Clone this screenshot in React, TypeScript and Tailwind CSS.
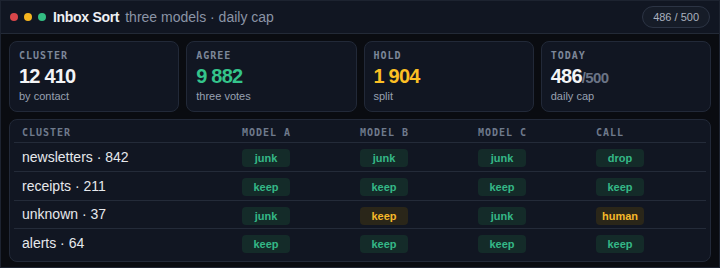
import React from 'react';

type Tone = 'green' | 'amber';

const stats = [
  { label: 'CLUSTER', value: '12 410', sub: 'by contact', color: 'text-[#f3f4f6]' },
  { label: 'AGREE', value: '9 882', sub: 'three votes', color: 'text-[#34c48b]' },
  { label: 'HOLD', value: '1 904', sub: 'split', color: 'text-[#fbbf24]' },
];

const rows: { name: string; a: string; b: string; c: string; call: string; bTone?: Tone; callTone?: Tone; h: string }[] = [
  { name: 'newsletters · 842', a: 'junk', b: 'junk', c: 'junk', call: 'drop', h: 'h-[29px]' },
  { name: 'receipts · 211', a: 'keep', b: 'keep', c: 'keep', call: 'keep', h: 'h-[29px]' },
  { name: 'unknown · 37', a: 'junk', b: 'keep', c: 'junk', call: 'human', bTone: 'amber', callTone: 'amber', h: 'h-[28px]' },
  { name: 'alerts · 64', a: 'keep', b: 'keep', c: 'keep', call: 'keep', h: 'h-[28px]' },
];

const Badge: React.FC<{ text: string; tone?: Tone }> = ({ text, tone = 'green' }) => (
  <span
    className={
      tone === 'amber'
        ? 'inline-flex h-[18px] min-w-[48px] items-center justify-center rounded-[4px] bg-[#2a2619] px-[6px] text-[11px] font-bold text-[#f5b82a]'
        : 'inline-flex h-[18px] min-w-[48px] items-center justify-center rounded-[4px] bg-[#142b29] px-[6px] text-[11px] font-bold text-[#34b887]'
    }
  >
    {text}
  </span>
);

const mono = { fontFamily: '"DejaVu Sans Mono", monospace' };

export default function App() {
  return (
    <div
      className="flex h-[268px] w-[720px] flex-col overflow-hidden border border-[#1d2330] bg-[#0a0c11]"
      style={{ fontFamily: '"Liberation Sans", Arial, sans-serif' }}
    >
      {/* header */}
      <div className="flex h-[33px] shrink-0 items-center border-b border-[#232a37] bg-[#111622] pl-[9px] pr-[9px]">
        <div className="flex items-center gap-[6px]">
          <span className="h-[8px] w-[8px] rounded-full bg-[#d9464a]" />
          <span className="h-[8px] w-[8px] rounded-full bg-[#f5b41f]" />
          <span className="h-[8px] w-[8px] rounded-full bg-[#33bd83]" />
        </div>
        <span className="ml-[7px] text-[14px] font-bold tracking-[-0.3px] text-[#eef0f4]">Inbox Sort</span>
        <span className="ml-[6px] text-[14px] text-[#8b94a6]">three models · daily cap</span>
        <span className="ml-auto flex h-[22px] items-center rounded-full border border-[#2c3444] bg-[#161c28] px-[10px] text-[11px] text-[#a9b1bf]">
          486 / 500
        </span>
      </div>

      <div className="flex flex-1 flex-col gap-[7px] px-[8px] pt-[7px]">
        {/* stat cards */}
        <div className="grid grid-cols-4 gap-[7px]">
          {stats.map((s) => (
            <div key={s.label} className="h-[71px] rounded-[8px] border border-[#222938] bg-[#111622] px-[9px] pt-[6px]">
              <div className="text-[10px] font-bold leading-[15px] tracking-[1px] text-[#7d8799]" style={mono}>
                {s.label}
              </div>
              <div className={`mt-[1px] text-[20px] font-bold leading-[24px] tracking-[-0.8px] ${s.color}`}>{s.value}</div>
              <div className="text-[11px] leading-[16px] text-[#98a1b1]">{s.sub}</div>
            </div>
          ))}
          <div className="h-[71px] rounded-[8px] border border-[#222938] bg-[#111622] px-[9px] pt-[6px]">
            <div className="text-[10px] font-bold leading-[15px] tracking-[1px] text-[#7d8799]" style={mono}>
              TODAY
            </div>
            <div className="mt-[1px] flex h-[24px] items-baseline leading-[24px]">
              <span className="text-[20px] font-bold tracking-[-0.8px] text-[#f3f4f6]">486</span>
              <span className="text-[15px] font-bold tracking-[-0.6px] text-[#6b7486]">/500</span>
            </div>
            <div className="text-[11px] leading-[16px] text-[#98a1b1]">daily cap</div>
          </div>
        </div>

        {/* table */}
        <div className="h-[143px] rounded-[8px] border border-[#222938] bg-[#111622] px-[4px]">
          <div
            className="grid h-[23px] grid-cols-[220px_1fr_1fr_1fr_1fr] items-center border-b border-[#242b39] pt-[2px] text-[10px] font-bold tracking-[1px] text-[#6f7a8c]"
            style={mono}
          >
            <span className="px-2">CLUSTER</span>
            <span className="px-2">MODEL A</span>
            <span className="px-2">MODEL B</span>
            <span className="px-2">MODEL C</span>
            <span className="px-2">CALL</span>
          </div>
          {rows.map((r, i) => (
            <div
              key={r.name}
              className={`grid ${r.h} grid-cols-[220px_1fr_1fr_1fr_1fr] items-center ${
                i < rows.length - 1 ? 'border-b border-[#242b39]' : ''
              }`}
            >
              <span className="px-2 text-[14px] text-[#e6e8ec]">{r.name}</span>
              <span className="px-2">
                <Badge text={r.a} />
              </span>
              <span className="px-2">
                <Badge text={r.b} tone={r.bTone} />
              </span>
              <span className="px-2">
                <Badge text={r.c} />
              </span>
              <span className="px-2">
                <Badge text={r.call} tone={r.callTone} />
              </span>
            </div>
          ))}
        </div>
      </div>
    </div>
  );
}
